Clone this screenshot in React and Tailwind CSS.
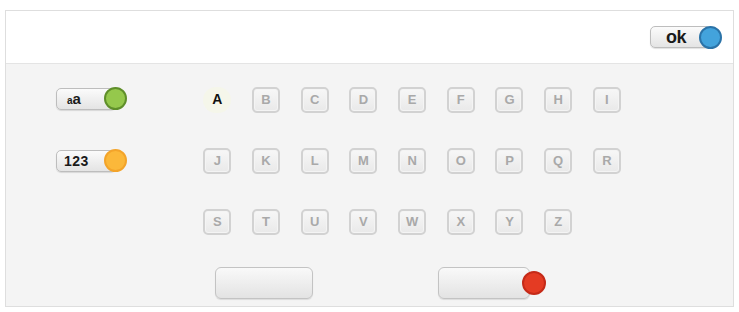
import React from "react";

const font = { fontFamily: "'Liberation Sans', Arial, sans-serif" };

function Pill({ children, w, circle, className = "" }) {
  return (
    <div className={"flex items-center " + className}>
      <div
        className="flex h-[22px] items-center rounded-[5px] border border-[#bdbdbd] bg-gradient-to-b from-[#fbfbfb] to-[#e4e4e4] pl-[7px] shadow-[0_1px_1px_rgba(0,0,0,0.12)]"
        style={{ width: w }}
      >
        {children}
      </div>
      <div className={"-ml-[12px] h-[23px] w-[23px] rounded-full border-2 " + circle} />
    </div>
  );
}

const rows = [
  ["A", "B", "C", "D", "E", "F", "G", "H", "I"],
  ["J", "K", "L", "M", "N", "O", "P", "Q", "R"],
  ["S", "T", "U", "V", "W", "X", "Y", "Z"],
];

function Key({ l }) {
  if (l === "A") {
    return (
      <div className="flex h-[26px] w-[28px] items-center justify-center rounded-full bg-[#f5f6ea] text-[14px] font-bold text-[#111]">
        A
      </div>
    );
  }
  return (
    <div className="flex h-[26px] w-[28px] items-center justify-center rounded-[5px] border-2 border-[#d2d2d2] bg-gradient-to-b from-[#f7f7f7] to-[#e9e9e9] text-[13px] font-bold text-[#a9a9a9] shadow-[inset_0_0_0_1px_#f4f4f4]">
      {l}
    </div>
  );
}

export default function App() {
  return (
    <div className="h-[312px] w-[739px] bg-white pl-[5px] pt-[10px]" style={font}>
      <div className="flex h-[297px] w-[729px] flex-col border border-[#dedede] bg-[#f4f4f4]">
        <div className="flex h-[53px] items-center justify-end border-b border-[#e4e4e4] bg-white pr-[11px]">
          <Pill w={61} circle="bg-[#43a3dc] border-[#2b73a8]" className="pl-[10px]">
            <span className="pl-[8px] text-[18px] font-bold leading-none tracking-[-0.5px] text-[#1a1a1a]">ok</span>
          </Pill>
        </div>
        <div className="flex flex-col pt-[5px]">
          {rows.map((r, i) => (
            <div key={i} className="flex h-[61px] items-center">
              <div className="w-[187px] pl-[50px]">
                {i === 0 && (
                  <Pill w={60} circle="bg-[#95c84c] border-[#5f8f2a]" className="-mt-[2px]">
                    <span className="pl-[3px] font-bold leading-none text-[#1a1a1a]">
                      <span className="text-[10px]">a</span>
                      <span className="text-[15px]">a</span>
                    </span>
                  </Pill>
                )}
                {i === 1 && (
                  <Pill w={60} circle="bg-[#fbb83a] border-[#f3a42a]">
                    <span className="text-[14px] font-bold leading-none tracking-[0.5px] text-[#1a1a1a]">123</span>
                  </Pill>
                )}
              </div>
              <div className="flex">
                {r.map((l) => (
                  <div key={l} className="flex w-[48.7px] justify-center">
                    <Key l={l} />
                  </div>
                ))}
              </div>
            </div>
          ))}
          <div className="mt-[15px] flex items-center">
            <div className="ml-[209px] h-[32px] w-[98px] rounded-[6px] border border-[#c3c3c3] bg-gradient-to-b from-[#f9f9f9] to-[#e3e3e3] shadow-[0_1px_1px_rgba(0,0,0,0.1)]" />
            <div className="ml-[125px] flex items-center">
              <div className="h-[32px] w-[92px] rounded-[6px] border border-[#c3c3c3] bg-gradient-to-b from-[#f9f9f9] to-[#e3e3e3] shadow-[0_1px_1px_rgba(0,0,0,0.1)]" />
              <div className="-ml-[8px] h-[24px] w-[24px] rounded-full border-2 border-[#c52a18] bg-[#e43b23]" />
            </div>
          </div>
        </div>
      </div>
    </div>
  );
}
